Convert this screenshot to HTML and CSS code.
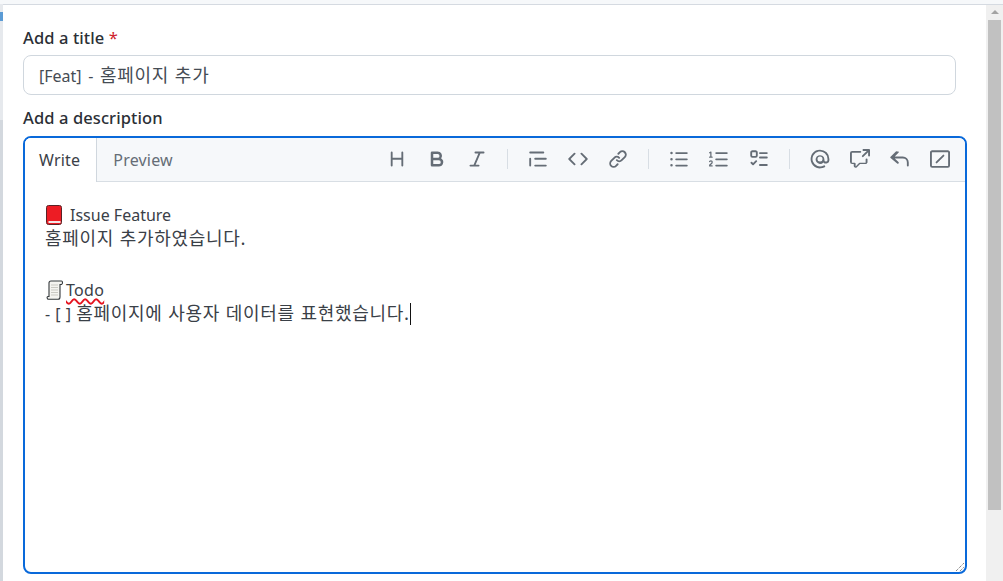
FILE: index.html
```html
<!DOCTYPE html>
<html lang="en">
<head>
    <meta charset="UTF-8">
    <title>New issue</title>
    <link rel="stylesheet" href="styles.css">
</head>
<body>
    <div class="page-strip">
        <div class="side-strip"></div>
        <div class="dialog">
            <div class="form">
                <div class="field-label">Add a title <span class="required">*</span></div>
                <div class="title-input">[Feat] - <span class="ko">홈페이지 추가</span></div>
                <div class="field-label desc-label">Add a description</div>
                <div class="editor">
                    <div class="editor-head">
                        <div class="tab tab-active">Write</div>
                        <div class="tab">Preview</div>
                        <div class="toolbar">
                            <div class="tool-group">
                                <svg class="icon" viewBox="0 0 16 16"><path d="M3.75 2a.75.75 0 0 1 .75.75V7h7V2.75a.75.75 0 0 1 1.5 0v10.5a.75.75 0 0 1-1.5 0V8.500h-7v4.750a.75.75 0 0 1-1.5 0V2.750A.75.75 0 0 1 3.750 2Z"/></svg>
                                <svg class="icon" viewBox="0 0 16 16"><path d="M4 2h4.500a3.501 3.501 0 0 1 2.852 5.530A3.499 3.499 0 0 1 9.500 14H4a1 1 0 0 1-1-1V3a1 1 0 0 1 1-1Zm1 7v3h4.500a1.500 1.500 0 0 0 0-3Zm3.500-2a1.500 1.500 0 0 0 0-3H5v3Z"/></svg>
                                <svg class="icon" viewBox="0 0 16 16"><path d="M6 2.750A.75.75 0 0 1 6.750 2h6.500a.75.75 0 0 1 0 1.500h-2.505l-3.858 9H9.250a.75.75 0 0 1 0 1.500h-6.500a.75.75 0 0 1 0-1.500h2.505l3.858-9H6.750A.75.75 0 0 1 6 2.750Z"/></svg>
                            </div>
                            <div class="tool-sep"></div>
                            <div class="tool-group">
                                <svg class="icon" viewBox="0 0 16 16"><path d="M1.750 2h10.500a.75.75 0 0 1 0 1.500H1.750a.75.75 0 0 1 0-1.500Zm4 5h8.500a.75.75 0 0 1 0 1.500h-8.500a.75.75 0 0 1 0-1.500Zm0 5.500h8.500a.75.75 0 0 1 0 1.500h-8.500a.75.75 0 0 1 0-1.500ZM2.500 7.750v5.500a.75.75 0 0 1-1.500 0v-5.500a.75.75 0 0 1 1.500 0Z"/></svg>
                                <svg class="icon" viewBox="0 0 16 16"><path d="m11.280 3.220 4.250 4.250a.75.75 0 0 1 0 1.060l-4.250 4.250a.749.749 0 0 1-1.060-1.060L13.940 8l-3.720-3.720a.749.749 0 0 1 1.060-1.060Zm-6.560 0a.75.75 0 0 1 1.060 1.060L2.060 8l3.720 3.720a.749.749 0 0 1-1.060 1.060L.470 8.530a.75.75 0 0 1 0-1.060Z"/></svg>
                                <svg class="icon" viewBox="0 0 16 16"><path d="m7.775 3.275 1.250-1.250a3.500 3.500 0 1 1 4.950 4.950l-2.500 2.500a3.500 3.500 0 0 1-4.950 0 .751.751 0 0 1 1.060-1.060 2 2 0 0 0 2.830 0l2.500-2.500a2.002 2.002 0 0 0-2.830-2.830l-1.250 1.250a.749.749 0 0 1-1.060-1.060Zm-4.690 9.640a2 2 0 0 0 2.830 0l1.250-1.250a.749.749 0 1 1 1.060 1.060l-1.250 1.250a3.500 3.500 0 1 1-4.950-4.950l2.500-2.500a3.500 3.500 0 0 1 4.950 0 .751.751 0 0 1-1.060 1.060 2 2 0 0 0-2.830 0l-2.500 2.500a2 2 0 0 0 0 2.830Z"/></svg>
                            </div>
                            <div class="tool-sep"></div>
                            <div class="tool-group">
                                <svg class="icon" viewBox="0 0 16 16"><path d="M5.750 2.500h8.500a.75.75 0 0 1 0 1.500h-8.500a.75.75 0 0 1 0-1.500Zm0 5h8.500a.75.75 0 0 1 0 1.500h-8.500a.75.75 0 0 1 0-1.500Zm0 5h8.500a.75.75 0 0 1 0 1.500h-8.500a.75.75 0 0 1 0-1.500ZM2 14a1 1 0 1 1 0-2 1 1 0 0 1 0 2Zm1-5.750a1 1 0 1 1-2 0 1 1 0 0 1 2 0ZM2 4.250a1 1 0 1 1 0-2 1 1 0 0 1 0 2Z"/></svg>
                                <svg class="icon" viewBox="0 0 16 16"><path d="M5 3.250a.75.75 0 0 1 .75-.75h8.500a.75.75 0 0 1 0 1.500h-8.500A.75.75 0 0 1 5 3.250Zm0 5a.75.75 0 0 1 .75-.75h8.500a.75.75 0 0 1 0 1.500h-8.500A.75.75 0 0 1 5 8.250Zm0 5a.75.75 0 0 1 .75-.75h8.500a.75.75 0 0 1 0 1.500h-8.500a.75.75 0 0 1-.75-.75ZM.924 10.320a.5.5 0 0 1-.851-.525l.001-.001.001-.002.002-.004.007-.011c.097-.144.215-.273.348-.384.228-.19.588-.392 1.068-.392.468 0 .858.181 1.126.484.259.294.377.673.377 1.038 0 .987-.686 1.495-1.156 1.845l-.047.035c-.303.225-.522.4-.654.597h1.357a.5.5 0 0 1 0 1H.5a.5.5 0 0 1-.5-.5c0-1.005.692-1.520 1.167-1.875l.035-.025c.531-.396.8-.625.8-1.078a.57.57 0 0 0-.128-.376C1.806 10.068 1.695 10 1.500 10a.658.658 0 0 0-.429.163.835.835 0 0 0-.144.153ZM2.003 2.500V6h.503a.5.5 0 0 1 0 1H.5a.5.5 0 0 1 0-1h.503V3.308l-.28.14a.5.5 0 0 1-.446-.895l1.003-.5a.5.5 0 0 1 .723.447Z"/></svg>
                                <svg class="icon" viewBox="0 0 16 16"><path d="M2.750 1h2.500C6.216 1 7 1.784 7 2.750v2.500A1.750 1.750 0 0 1 5.250 7h-2.500A1.750 1.750 0 0 1 1 5.250v-2.500C1 1.784 1.784 1 2.750 1Zm0 1.500a.25.25 0 0 0-.25.25v2.500c0 .138.112.25.25.25h2.500a.25.25 0 0 0 .25-.25v-2.500a.25.25 0 0 0-.25-.25Zm6 0h5.500a.75.75 0 0 1 0 1.500h-5.500a.75.75 0 0 1 0-1.500Zm0 3.500h5.500a.75.75 0 0 1 0 1.500h-5.500a.75.75 0 0 1 0-1.500Zm0 6h5.500a.75.75 0 0 1 0 1.500h-5.500a.75.75 0 0 1 0-1.500Zm-2.470-2.780a.75.75 0 0 1 0 1.060l-2.500 2.500a.75.75 0 0 1-1.060 0l-1.250-1.250a.749.749 0 1 1 1.060-1.060l.72.72 1.970-1.970a.75.75 0 0 1 1.060 0Z"/></svg>
                            </div>
                            <div class="tool-sep"></div>
                            <div class="tool-group">
                                <svg class="icon" viewBox="0 0 16 16"><path d="M8 .5a7.500 7.500 0 1 0 3.750 14 .75.75 0 0 0-.75-1.300A6 6 0 1 1 14 8v.75a1.250 1.250 0 0 1-2.500 0V8A3.500 3.500 0 1 0 10.700 10.700 2.750 2.750 0 0 0 15.500 8.750V8A7.500 7.500 0 0 0 8 .5ZM8 6a2 2 0 1 1 0 4 2 2 0 0 1 0-4Z"/></svg>
                                <svg class="icon" viewBox="0 0 16 16"><path d="M1.750 1.500h6.500a.75.75 0 0 1 0 1.500h-6.500a.25.25 0 0 0-.25.25v7.500c0 .138.112.25.25.25h2a.75.75 0 0 1 .75.75v2.190l2.720-2.720a.75.75 0 0 1 .53-.22h4.500a.25.25 0 0 0 .25-.25v-2.500a.75.75 0 0 1 1.500 0v2.500A1.750 1.750 0 0 1 12.250 12H8.060l-2.573 2.573A1.458 1.458 0 0 1 3 13.543V12H1.750A1.750 1.750 0 0 1 0 10.250v-7A1.750 1.750 0 0 1 1.750 1.500ZM10.750 0h4.500a.75.75 0 0 1 .75.75v4.500a.75.75 0 0 1-1.500 0V2.560l-3.720 3.720a.749.749 0 1 1-1.060-1.060L13.440 1.500h-2.690a.75.75 0 0 1 0-1.500Z"/></svg>
                                <svg class="icon" viewBox="0 0 16 16"><path d="M6.780 1.970a.75.75 0 0 1 0 1.060L3.810 6h6.440A4.750 4.750 0 0 1 15 10.750v2.500a.75.75 0 0 1-1.500 0v-2.500a3.250 3.250 0 0 0-3.250-3.250H3.810l2.970 2.970a.749.749 0 1 1-1.060 1.060L.470 7.280a.75.75 0 0 1 0-1.060l4.250-4.250a.75.75 0 0 1 1.060 0Z"/></svg>
                                <svg class="icon" viewBox="0 0 16 16"><path d="M0 2.750C0 1.784.784 1 1.750 1h12.500c.966 0 1.750.784 1.750 1.750v10.500A1.750 1.750 0 0 1 14.250 15H1.750A1.750 1.750 0 0 1 0 13.250Zm1.750-.25a.25.25 0 0 0-.25.25v10.500c0 .138.112.25.25.25h12.500a.25.25 0 0 0 .25-.25V2.750a.25.25 0 0 0-.25-.25Zm9.530 2.220a.75.75 0 0 1 0 1.060l-5.500 5.500a.749.749 0 1 1-1.060-1.060l5.500-5.500a.75.75 0 0 1 1.060 0Z"/></svg>
                            </div>
                        </div>
                    </div>
                    <div class="editor-body">
                        <div class="line"><svg class="emoji" viewBox="0 0 16 20"><rect x=".5" y=".5" width="15" height="19" rx="2" fill="#ed1c24" stroke="#5a2226"/><rect x="2.500" y="16" width="12" height="2" fill="#f5e6e6"/></svg><span class="emoji-gap"></span>Issue Feature</div>
                        <div class="line ko-line"><span class="ko">홈페이지 추가하였습니다.</span></div>
                        <div class="line">&nbsp;</div>
                        <div class="line"><svg class="emoji scroll" viewBox="0 0 18 20"><path d="M5 1h10.500c1.200 0 1.500 3 0 3.500H14V17c0 1.200-.8 2.300-2 2.300H2.500C1 19.300.5 16.500 2 16.500h1V3C3 1.800 3.800 1 5 1Z" fill="#f4f4f0" stroke="#33383b" stroke-width="1.100"/><path d="M5 5h7M5 7.500h7M5 10h7M5 12.500h7M5 15h7" stroke="#c9c9c2"/></svg><span class="misspelled">Todo</span></div>
                        <div class="line ko-line">- [ ] <span class="ko">홈페이지에 사용자 데이터를 표현했습니다.</span><span class="caret"></span></div>
                        <svg class="resizer" viewBox="0 0 10 10"><path d="M1 9 9 1M5 9 9 5" stroke="#555" stroke-dasharray="1 1"/></svg>
                    </div>
                </div>
            </div>
            <div class="scrollbar">
                <div class="scroll-up"></div>
                <div class="scroll-thumb"></div>
            </div>
        </div>
    </div>
</body>
</html>
```
FILE: styles.css
```css
html, body {
    margin: 0;
    height: 100%;
    overflow: hidden;
}
body {
    font-family: "Noto Sans", "Noto Sans CJK KR", sans-serif;
    color: #24292f;
    background-color: #f6f8fa;
}
.page-strip {
    display: flex;
    height: 581px;
    padding-top: 4px;
    box-sizing: border-box;
}
.side-strip {
    width: 3px;
    flex-shrink: 0;
    background: linear-gradient(#e6e9ed 0 8px, #5b9bd5 8px 17px, #e6e9ed 17px 116px, #d3d8de 116px);
}
.dialog {
    flex: 1;
    display: flex;
    background-color: white;
    border-top: 1px solid #d5dae1;
    min-width: 0;
    height: 577px;
    box-sizing: border-box;
}
.form {
    flex: 1;
    padding: 21px 20px 0 20px;
    min-width: 0;
}
.field-label {
    font-size: 16.500px;
    font-weight: 500;
    letter-spacing: .1px;
    line-height: 24px;
    height: 24px;
    color: #2b3036;
}
.required {
    color: #cf222e;
    font-weight: 400;
}
.ko {
    font-family: "Noto Sans CJK KR", sans-serif;
    font-size: 18px;
    letter-spacing: .7px;
    word-spacing: 1px;
}
.title-input {
    width: 933px;
    height: 40px;
    margin-top: 5px;
    padding-left: 15px;
    box-sizing: border-box;
    border: 1px solid #d0d7de;
    border-radius: 8px;
    font-size: 16px;
    line-height: 37px;
    word-spacing: 2.500px;
    color: #454c54;
}
.desc-label {
    margin-top: 11px;
}
.editor {
    width: 944px;
    height: 438px;
    margin-top: 6px;
    box-sizing: border-box;
    border: 2px solid #0969da;
    border-radius: 8px;
    overflow: hidden;
    display: flex;
    flex-direction: column;
}
.editor-head {
    display: flex;
    height: 44px;
    flex-shrink: 0;
    box-sizing: border-box;
    background-color: #f6f8fa;
    border-bottom: 1px solid #d8dee4;
}
.tab {
    padding: 0 16px;
    font-size: 16px;
    letter-spacing: .2px;
    line-height: 45px;
    color: #656d76;
}
.tab-active {
    background-color: white;
    color: #3a4047;
    border-right: 1px solid #d0d7de;
    height: 44px;
    padding: 0 16px 0 14px;
}
.toolbar {
    margin-left: auto;
    padding: 0 15px 2px 0;
    display: flex;
    align-items: center;
}
.tool-group {
    display: flex;
    gap: 20px;
}
.tool-sep {
    width: 1px;
    height: 20px;
    margin: 0 20px;
    background-color: #d8dee4;
}
.icon {
    width: 20px;
    height: 20px;
    fill: #656d76;
    fill-rule: evenodd;
    display: block;
}
.editor-body {
    flex: 1;
    position: relative;
    padding: 21px 20px 0 20px;
    font-size: 16px;
    line-height: 25px;
    color: #3a4047;
}
.line {
    height: 25px;
    white-space: nowrap;
}
.ko-line {
    position: relative;
    top: -3px;
    word-spacing: 1px;
}
.emoji {
    width: 16px;
    height: 20px;
    vertical-align: -4px;
    margin-left: 1px;
}
.emoji-gap {
    display: inline-block;
    width: 8px;
}
.scroll {
    width: 18px;
    margin-left: 1px;
    margin-right: 2px;
}
.misspelled {
    letter-spacing: .3px;
    text-decoration: underline wavy #e5141f 1.500px;
    text-underline-offset: 2px;
}
.caret {
    display: inline-block;
    width: 1px;
    height: 22px;
    background-color: #111;
    vertical-align: -5px;
}
.resizer {
    position: absolute;
    right: 0;
    bottom: 0;
    width: 10px;
    height: 10px;
}
.scrollbar {
    width: 17px;
    flex-shrink: 0;
    height: 100%;
    background-color: #f0f0f0;
}
.scroll-up {
    height: 15px;
    position: relative;
}
.scroll-up::after {
    content: "";
    position: absolute;
    left: 5px;
    top: 5px;
    border-left: 4px solid transparent;
    border-right: 4px solid transparent;
    border-bottom: 4px solid #a3a3a3;
}
.scroll-thumb {
    height: 490px;
    margin: 0 2px;
    background-color: #c1c1c1;
}
```
